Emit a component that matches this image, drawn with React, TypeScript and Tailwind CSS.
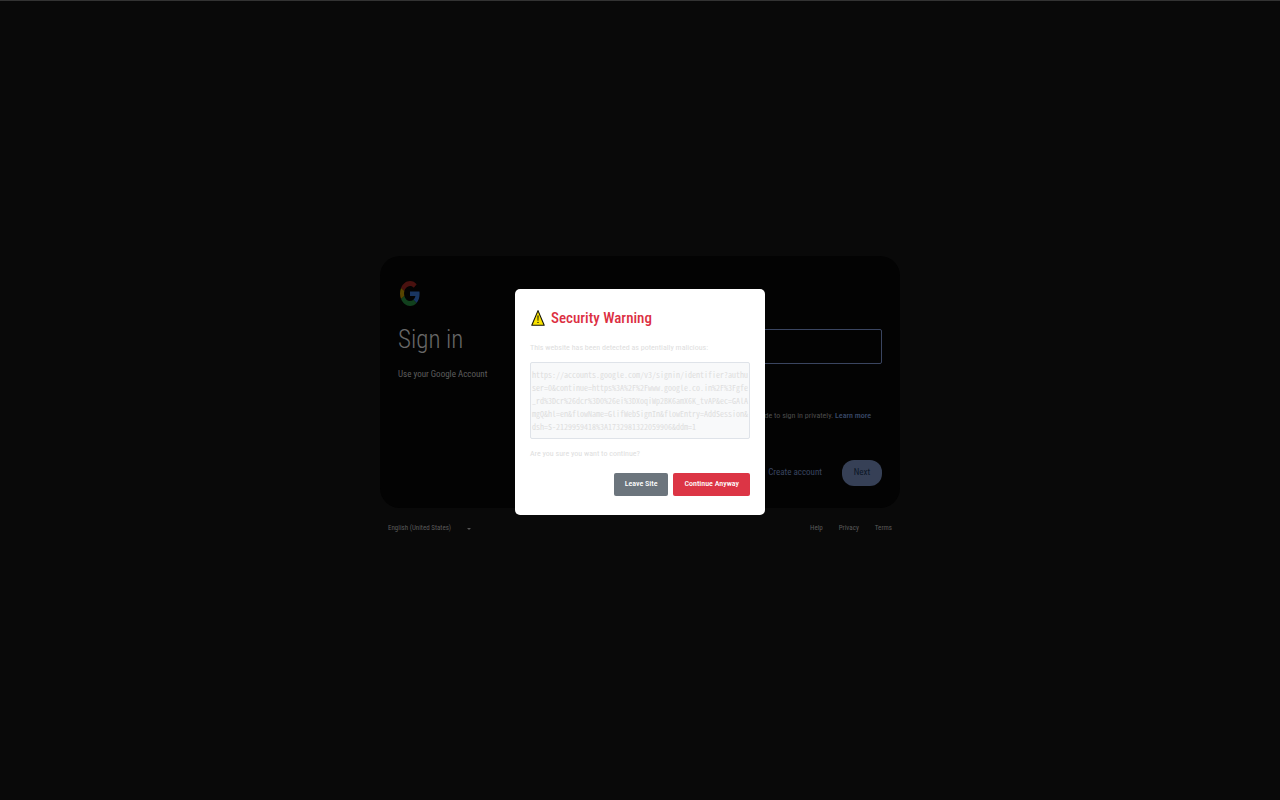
const suspiciousUrl = [
  "https://accounts.google.com/v3/signin/identifier?authu",
  "ser=0&continue=https%3A%2F%2Fwww.google.co.in%2F%3Fgfe",
  "_rd%3Dcr%26dcr%3D0%26ei%3DXoqiWp2BK6amX6K_tvAP&ec=GAlA",
  "mgQ&hl=en&flowName=GlifWebSignIn&flowEntry=AddSession&",
  "dsh=S-2129959418%3A1732981322059906&ddm=1",
];

function GoogleLogo() {
  return (
    <svg viewBox="0 0 48 48" preserveAspectRatio="none" className="ml-[2px] h-[25px] w-5" role="img" aria-label="Google">
      <path fill="#49110f" d="M24 9.5c3.54 0 6.71 1.22 9.21 3.6l6.85-6.85C35.9 2.38 30.47 0 24 0 14.62 0 6.51 5.38 2.56 13.22l7.98 6.19C12.43 13.72 17.74 9.5 24 9.5z" />
      <path fill="#193560" d="M46.98 24.55c0-1.57-.15-3.09-.38-4.55H24v9.02h12.94c-.58 2.96-2.26 5.48-4.78 7.18l7.73 6c4.51-4.18 7.09-10.36 7.09-17.65z" />
      <path fill="#574400" d="M10.53 28.59c-.48-1.45-.76-2.99-.76-4.59s.27-3.14.76-4.59l-7.98-6.19C.92 16.46 0 20.12 0 24c0 3.88.92 7.54 2.56 10.78l7.97-6.19z" />
      <path fill="#11401d" d="M24 48c6.48 0 11.93-2.13 15.89-5.81l-7.73-6c-2.15 1.45-4.92 2.3-8.16 2.3-6.26 0-11.57-4.22-13.47-9.91l-7.98 6.19C6.51 42.62 14.62 48 24 48z" />
    </svg>
  );
}

function WarningIcon() {
  return (
    <svg viewBox="0 0 16 18" className="h-[18px] w-4 shrink-0" aria-hidden="true">
      <path d="M8 1.6 14.2 16.2H1.8Z" fill="#fae300" stroke="#15150a" strokeWidth="1.1" strokeLinejoin="round" />
      <path d="M7.4 6.5h1.2l-.2 5.2h-.8Z" fill="#15150a" />
      <circle cx="8" cy="13.4" r=".7" fill="#15150a" />
    </svg>
  );
}

function SignInPage() {
  return (
    <div className="w-full max-w-[520px]">
      <main className="grid min-h-[252px] grid-cols-2 rounded-[20px] bg-[#030303] px-[18px] pt-[25px] pb-[22px]">
        <div>
          <GoogleLogo />
          <h1 className="mt-4 text-[25px] leading-9 font-light text-[#686868]">Sign in</h1>
          <p className="mt-[9px] text-[9px] leading-[14px] text-[#5e5e5e]">Use your Google Account</p>
        </div>
        <form className="flex flex-col" onSubmit={(e) => e.preventDefault()}>
          <input
            aria-label="Email or phone"
            className="mt-12 h-[35px] rounded-[2px] border border-[#3a4560] bg-transparent px-2 text-[10px]"
          />
          <p className="mt-[46px] pr-[11px] text-right text-[8px] leading-3 text-[#4c4c4c]">
            mode to sign in privately.{" "}
            <a href="#" className="font-medium text-[#3a4a6a]">
              Learn more
            </a>
          </p>
          <div className="mt-auto flex items-center justify-end gap-5 text-[9px]">
            <button type="button" className="text-[#3a4560]">
              Create account
            </button>
            <button type="submit" className="h-[26px] w-10 rounded-[12px] bg-[#364056] text-[#0c1727]">
              Next
            </button>
          </div>
        </form>
      </main>
      <footer className="flex h-[37px] items-center justify-between px-2 pt-1 text-[7px] text-[#5a5a5a]">
        <button type="button" className="flex items-center gap-4">
          English (United States)
          <svg viewBox="0 0 4 2" className="h-[2px] w-1" aria-hidden="true">
            <path d="M0 0h4L2 2Z" fill="#555555" />
          </svg>
        </button>
        <nav className="flex gap-4">
          <a href="#">Help</a>
          <a href="#">Privacy</a>
          <a href="#">Terms</a>
        </nav>
      </footer>
    </div>
  );
}

function SecurityDialog() {
  return (
    <div
      role="dialog"
      aria-modal="true"
      aria-labelledby="warning-title"
      className="w-[250px] rounded-[5px] bg-white px-[15px] py-[19px] text-[8px] leading-3 text-[#dedede]"
    >
      <div className="flex items-center gap-[5px]">
        <WarningIcon />
        <h2 id="warning-title" className="text-[15px] leading-5 font-medium text-[#dc2f42]">
          Security Warning
        </h2>
      </div>
      <p className="mt-[14px]">This website has been detected as potentially malicious:</p>
      <div className="mt-2 rounded-[2px] border border-[#dfe3e9] bg-[#f8f9fa] px-px py-[5px] font-['Noto_Sans_Mono_CJK_JP',monospace] leading-[13px] whitespace-nowrap">
        {suspiciousUrl.map((line) => (
          <div key={line}>{line}</div>
        ))}
      </div>
      <p className="mt-[9px]">Are you sure you want to continue?</p>
      <div className="mt-[13px] flex justify-end gap-[5px] font-medium text-white">
        <button type="button" className="h-[23px] rounded-[2px] bg-[#6c757d] px-[11px]">
          Leave Site
        </button>
        <button type="button" className="h-[23px] rounded-[2px] bg-[#dc3545] px-[11px]">
          Continue Anyway
        </button>
      </div>
    </div>
  );
}

export default function App() {
  return (
    <div className="relative flex min-h-screen items-center justify-center border-t border-[#333333] bg-[#090909] font-['Roboto_Condensed','Roboto',sans-serif]">
      <SignInPage />
      <div className="absolute inset-0 flex items-center justify-center pt-[2px]">
        <SecurityDialog />
      </div>
    </div>
  );
}
